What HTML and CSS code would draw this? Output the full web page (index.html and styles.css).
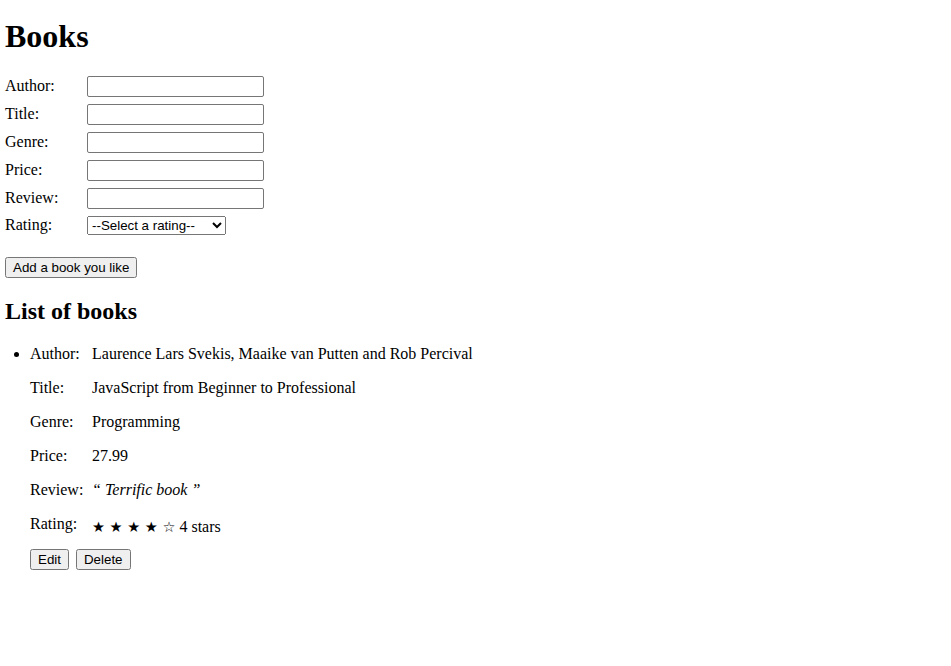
FILE: index.html
```html
<!DOCTYPE html>
<html lang="en">
<head>
<meta charset="utf-8">
<title>Books</title>
<link rel="stylesheet" href="styles.css">
</head>
<body>
<h1 class="title">Books</h1>
<form class="book-form">
  <div class="frow"><label class="flabel" for="author">Author:</label><input class="finput" id="author" type="text"></div>
  <div class="frow"><label class="flabel" for="title">Title:</label><input class="finput" id="title" type="text"></div>
  <div class="frow"><label class="flabel" for="genre">Genre:</label><input class="finput" id="genre" type="text"></div>
  <div class="frow"><label class="flabel" for="price">Price:</label><input class="finput" id="price" type="text"></div>
  <div class="frow"><label class="flabel" for="review">Review:</label><input class="finput" id="review" type="text"></div>
  <div class="frow frow-last"><label class="flabel" for="rating">Rating:</label>
    <select class="fselect" id="rating">
      <option>--Select a rating--</option>
      <option>1 star</option>
      <option>2 stars</option>
      <option>3 stars</option>
      <option>4 stars</option>
      <option>5 stars</option>
    </select>
  </div>
  <div class="factions"><button class="btn" type="button">Add a book you like</button></div>
</form>
<h2 class="subtitle">List of books</h2>
<ul class="book-list">
  <li class="book">
    <div class="irow"><span class="ilabel">Author:</span><span class="ivalue">Laurence Lars Svekis, Maaike van Putten and Rob Percival</span></div>
    <div class="irow"><span class="ilabel">Title:</span><span class="ivalue">JavaScript from Beginner to Professional</span></div>
    <div class="irow"><span class="ilabel">Genre:</span><span class="ivalue">Programming</span></div>
    <div class="irow"><span class="ilabel">Price:</span><span class="ivalue">27.99</span></div>
    <div class="irow"><span class="ilabel">Review:</span><span class="ivalue review">“ Terrific book ”</span></div>
    <div class="irow"><span class="ilabel">Rating:</span><span class="ivalue rating"><span class="stars">★ ★ ★ ★ ☆</span> 4 stars</span></div>
    <div class="iactions"><button class="btn" type="button">Edit</button><button class="btn" type="button">Delete</button></div>
  </li>
</ul>
</body>
</html>
```
FILE: styles.css
```css
html, body {
  background: #fff;
}
body {
  margin: 0;
  padding: 0 5px;
  font-family: "Liberation Serif", "Times New Roman", serif;
  font-size: 16px;
  color: #000;
}
.title {
  font-size: 32px;
  font-weight: bold;
  margin: 18px 0 21px;
}
.book-form {
  margin: 0;
}
.frow {
  display: flex;
  align-items: baseline;
  margin-bottom: 7px;
}
.frow-last {
  margin-bottom: 22px;
}
.flabel {
  width: 82px;
  flex: none;
}
.finput {
  box-sizing: border-box;
  width: 177px;
  height: 21px;
  border: 1px solid #767676;
  border-radius: 2px;
  padding: 1px 2px;
  font: 13.333px "Liberation Sans", Arial, sans-serif;
  background: #fff;
  margin: 0;
}
.fselect {
  box-sizing: border-box;
  width: 139px;
  height: 19px;
  margin: 0;
  font: 13.333px "Liberation Sans", Arial, sans-serif;
  color: #000;
}
.factions {
  display: flex;
}
.btn {
  font: 13.333px "Liberation Sans", Arial, sans-serif;
  color: #000;
  margin: 0;
}
.subtitle {
  font-size: 24px;
  font-weight: bold;
  margin: 19.92px 0;
}
.book-list {
  margin: 16px 0;
  padding-left: 25px;
}
.irow {
  display: flex;
  align-items: flex-start;
  height: 18px;
  margin-bottom: 16px;
}
.ilabel {
  width: 62px;
  flex: none;
}
.review {
  font-style: italic;
}
.rating {
  padding-top: 3px;
}
.stars {
  font-family: "DejaVu Sans", sans-serif;
  font-size: 14.5px;
}
.iactions {
  display: flex;
  gap: 7px;
}
```
